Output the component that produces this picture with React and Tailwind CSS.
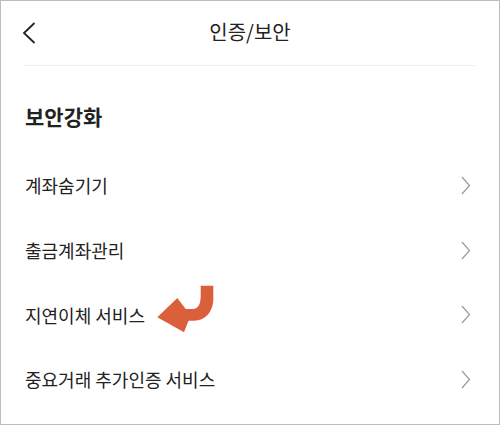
const items = ['계좌숨기기', '출금계좌관리', '지연이체 서비스', '중요거래 추가인증 서비스']

const BackIcon = () => (
  <svg width="14" height="22" viewBox="0 0 14 22" className="absolute left-[21px] top-[21px]">
    <polyline points="12.5,1 2,11 12.5,21" fill="none" stroke="#222" strokeWidth="1.8" />
  </svg>
)

const RowChevron = () => (
  <svg width="10" height="19" viewBox="0 0 10 19">
    <polyline points="1,1 8.5,9.5 1,18" fill="none" stroke="#999" strokeWidth="1.2" />
  </svg>
)

// orange arrow pointing at the 지연이체 row
const CurvedArrow = () => (
  <svg width="70" height="60" viewBox="0 0 70 60" className="absolute left-[149px] top-[279px]">
    <path
      d="M50.7 5.7 H63.3 V19 C63.3 32 55 40.7 44 40.7 H38.5 L34 52.3 L7.3 37.3 L27.3 18 L35.7 29 H43 C48 29 50.7 24 50.7 16 Z"
      fill="#d9603b"
    />
  </svg>
)

const App = () => {
  return (
    <div
      className="relative w-[500px] h-[425px] bg-white border border-[#bdbdbd] overflow-hidden text-[#222]"
      style={{ fontFamily: '"Noto Sans CJK KR", "Noto Sans", sans-serif' }}
    >
      {/* Header */}
      <div className="relative h-[64px] flex items-center justify-center">
        <BackIcon />
        <h1 className="text-[20px] font-normal leading-[28px] mt-[-2px]">인증/보안</h1>
      </div>
      <div className="mx-[23px] border-t border-[#eeeeee]" />

      <div className="px-[24px] pt-[36px]">
        <h2 className="text-[21px] font-bold leading-[28px]">보안강화</h2>
      </div>

      <ul className="mt-[23px]">
        {items.map((label) => (
          <li key={label} className="h-[64.7px] pl-[24px] pr-[28px] flex items-center justify-between">
            <span className="text-[18px] leading-[24px]">{label}</span>
            <RowChevron />
          </li>
        ))}
      </ul>

      <CurvedArrow />
    </div>
  )
}

export default App
